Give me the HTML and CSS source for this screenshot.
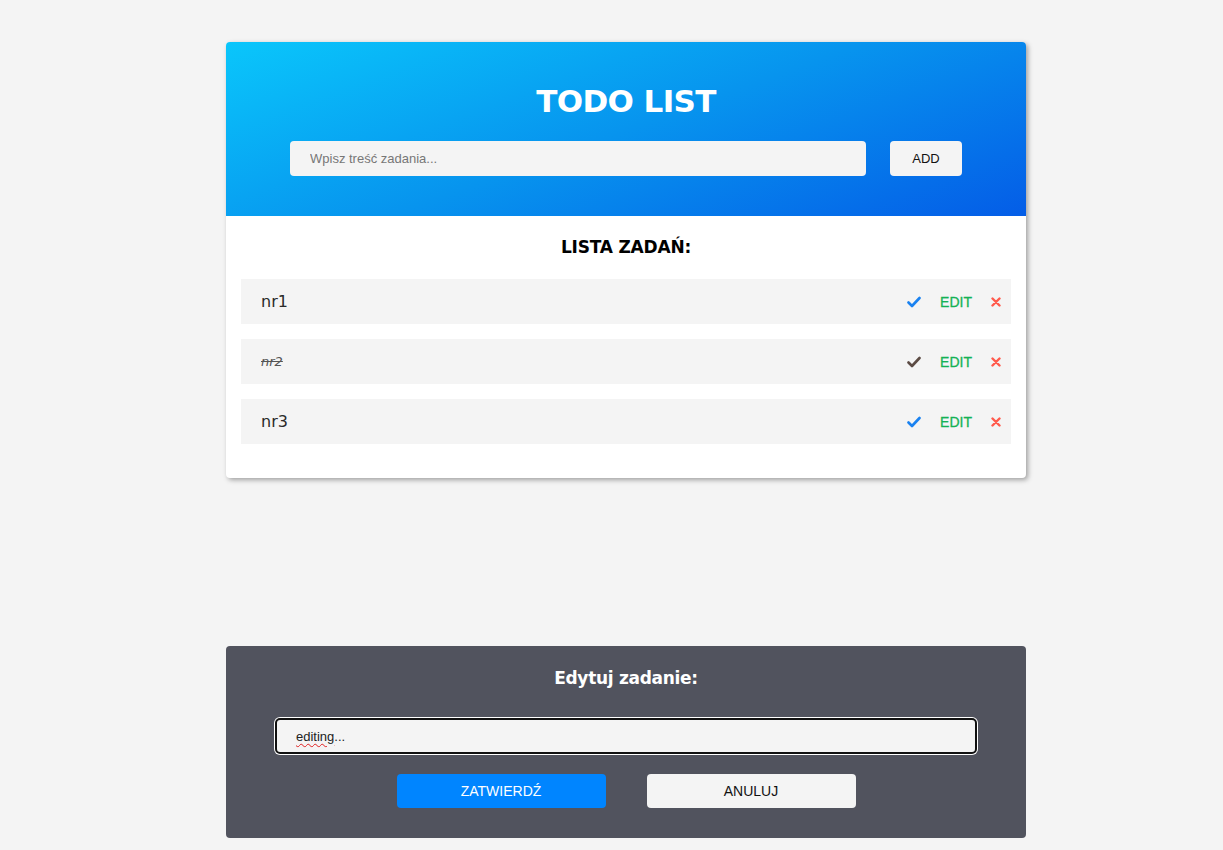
FILE: index.html
```html
<!DOCTYPE html>
<html lang="pl">
<head>
<meta charset="utf-8">
<title>Todo list</title>
<link rel="stylesheet" href="styles.css">
</head>
<body>
<div class="page">
  <div class="card">
    <header class="card-header">
      <h1 class="title">TODO LIST</h1>
      <div class="add-row">
        <input class="add-input" type="text" placeholder="Wpisz treść zadania...">
        <button class="btn btn-light add-btn">ADD</button>
      </div>
    </header>
    <section class="list-section">
      <h2 class="list-title">LISTA ZADAŃ:</h2>
      <ul class="list">
        <li class="item">
          <span class="item-text">nr1</span>
          <div class="actions">
            <button class="icon-btn check"><svg width="14" height="12" viewBox="0 0 14 12"><path d="M1.5 6.5 L5 10 L12.5 2" fill="none" stroke="currentColor" stroke-width="2.6" stroke-linecap="round" stroke-linejoin="round"/></svg></button>
            <button class="edit-btn">EDIT</button>
            <button class="icon-btn del"><svg width="10" height="10" viewBox="0 0 10 10"><path d="M1.5 1.5 L8.5 8.5 M8.5 1.5 L1.5 8.5" fill="none" stroke="currentColor" stroke-width="2.4" stroke-linecap="round"/></svg></button>
          </div>
        </li>
        <li class="item done">
          <span class="item-text">nr2</span>
          <div class="actions">
            <button class="icon-btn check"><svg width="14" height="12" viewBox="0 0 14 12"><path d="M1.5 6.5 L5 10 L12.5 2" fill="none" stroke="currentColor" stroke-width="2.6" stroke-linecap="round" stroke-linejoin="round"/></svg></button>
            <button class="edit-btn">EDIT</button>
            <button class="icon-btn del"><svg width="10" height="10" viewBox="0 0 10 10"><path d="M1.5 1.5 L8.5 8.5 M8.5 1.5 L1.5 8.5" fill="none" stroke="currentColor" stroke-width="2.4" stroke-linecap="round"/></svg></button>
          </div>
        </li>
        <li class="item">
          <span class="item-text">nr3</span>
          <div class="actions">
            <button class="icon-btn check"><svg width="14" height="12" viewBox="0 0 14 12"><path d="M1.5 6.5 L5 10 L12.5 2" fill="none" stroke="currentColor" stroke-width="2.6" stroke-linecap="round" stroke-linejoin="round"/></svg></button>
            <button class="edit-btn">EDIT</button>
            <button class="icon-btn del"><svg width="10" height="10" viewBox="0 0 10 10"><path d="M1.5 1.5 L8.5 8.5 M8.5 1.5 L1.5 8.5" fill="none" stroke="currentColor" stroke-width="2.4" stroke-linecap="round"/></svg></button>
          </div>
        </li>
      </ul>
    </section>
  </div>

  <div class="edit-panel">
    <h3 class="edit-title">Edytuj zadanie:</h3>
    <div class="edit-input"><span class="typo">editing</span>...</div>
    <div class="edit-buttons">
      <button class="btn btn-blue">ZATWIERDŹ</button>
      <button class="btn btn-light">ANULUJ</button>
    </div>
  </div>
</div>
</body>
</html>
```

FILE: styles.css
```css
* { box-sizing: border-box; }
html, body { margin: 0; padding: 0; }
body {
  background: #f4f4f4;
  font-family: "Montserrat", "DejaVu Sans", "Noto Sans", sans-serif;
  color: #000;
  padding-left: 29px;
}
.page {
  width: 800px;
  margin: 0 auto;
  padding-top: 42px;
}
.card {
  background: #fff;
  border-radius: 4px;
  box-shadow: 2px 2px 5px rgba(0, 0, 0, 0.35);
  overflow: hidden;
}
.card-header {
  height: 174px;
  background: linear-gradient(160deg, #0ac6fb 0%, #0794ee 50%, #045de7 100%);
  padding-top: 40px;
}
.title {
  margin: 0;
  text-align: center;
  color: #fff;
  font-family: "DejaVu Sans", sans-serif;
  font-weight: 700;
  font-size: 31px;
  line-height: 38px;
  letter-spacing: -0.6px;
}
.add-row {
  display: flex;
  justify-content: center;
  gap: 24px;
  margin-top: 21px;
}
.add-input {
  width: 576px;
  height: 35px;
  border: none;
  border-radius: 4px;
  background: #f4f4f4;
  padding: 0 20px;
  font-family: "Liberation Sans", Arial, sans-serif;
  font-size: 13px;
  outline: none;
}
.add-input::placeholder { color: #777; }
.btn {
  border: none;
  border-radius: 4px;
  font-family: "Liberation Sans", Arial, sans-serif;
  font-size: 14px;
  cursor: pointer;
}
.btn-light { background: #f4f4f4; color: #111; }
.btn-blue { background: #0085ff; color: #fff; }
.add-btn { width: 72px; height: 35px; font-size: 13px; }

.list-section {
  padding: 20px 15px 34px;
}
.list-title {
  margin: 0 0 21px;
  text-align: center;
  font-family: "DejaVu Sans", sans-serif;
  font-weight: 700;
  font-size: 17px;
  line-height: 22px;
  letter-spacing: -0.2px;
}
.list {
  list-style: none;
  margin: 0;
  padding: 0;
  display: flex;
  flex-direction: column;
  gap: 15px;
}
.item {
  height: 45px;
  background: #f4f4f4;
  display: flex;
  align-items: center;
  justify-content: space-between;
  padding: 0 10px 0 20px;
}
.item-text {
  font-family: "DejaVu Sans", sans-serif;
  font-size: 16px;
  color: #2a2a2a;
}
.item.done .item-text {
  font-size: 13px;
  font-style: italic;
  color: #555;
  text-decoration: line-through;
}
.actions {
  display: flex;
  align-items: center;
}
.icon-btn, .edit-btn {
  border: none;
  background: none;
  padding: 0;
  cursor: pointer;
  display: flex;
  align-items: center;
}
.check { color: #1a82f0; margin-right: 19px; }
.item.done .check { color: #5c4b44; }
.edit-btn {
  font-family: "Liberation Sans", Arial, sans-serif;
  font-size: 14px;
  font-weight: 400;
  color: #15b255;
  margin-right: 19px;
  -webkit-text-stroke: 0.3px #15b255;
}
.del { color: #ff5a4c; margin-right: 0; }

.edit-panel {
  margin-top: 168px;
  background: #51535e;
  border-radius: 4px;
  height: 192px;
  padding: 20px 49px 0;
}
.edit-title {
  margin: 0;
  text-align: center;
  color: #fff;
  font-family: "DejaVu Sans", sans-serif;
  font-weight: 700;
  font-size: 17px;
  line-height: 24px;
  letter-spacing: -0.3px;
}
.edit-input {
  margin-top: 28px;
  height: 36px;
  background: #f4f4f4;
  border-radius: 5px;
  border: 2px solid #111;
  box-shadow: 0 0 0 1px #fff;
  padding: 0 19px;
  display: flex;
  align-items: center;
  font-family: "Liberation Sans", Arial, sans-serif;
  font-size: 13px;
  color: #222;
}
.typo {
  text-decoration: underline wavy #e02020;
  text-decoration-thickness: 1px;
  text-underline-offset: 2px;
}
.edit-buttons {
  display: flex;
  justify-content: center;
  gap: 41px;
  margin-top: 20px;
}
.edit-buttons .btn {
  width: 209px;
  height: 34px;
}
```
